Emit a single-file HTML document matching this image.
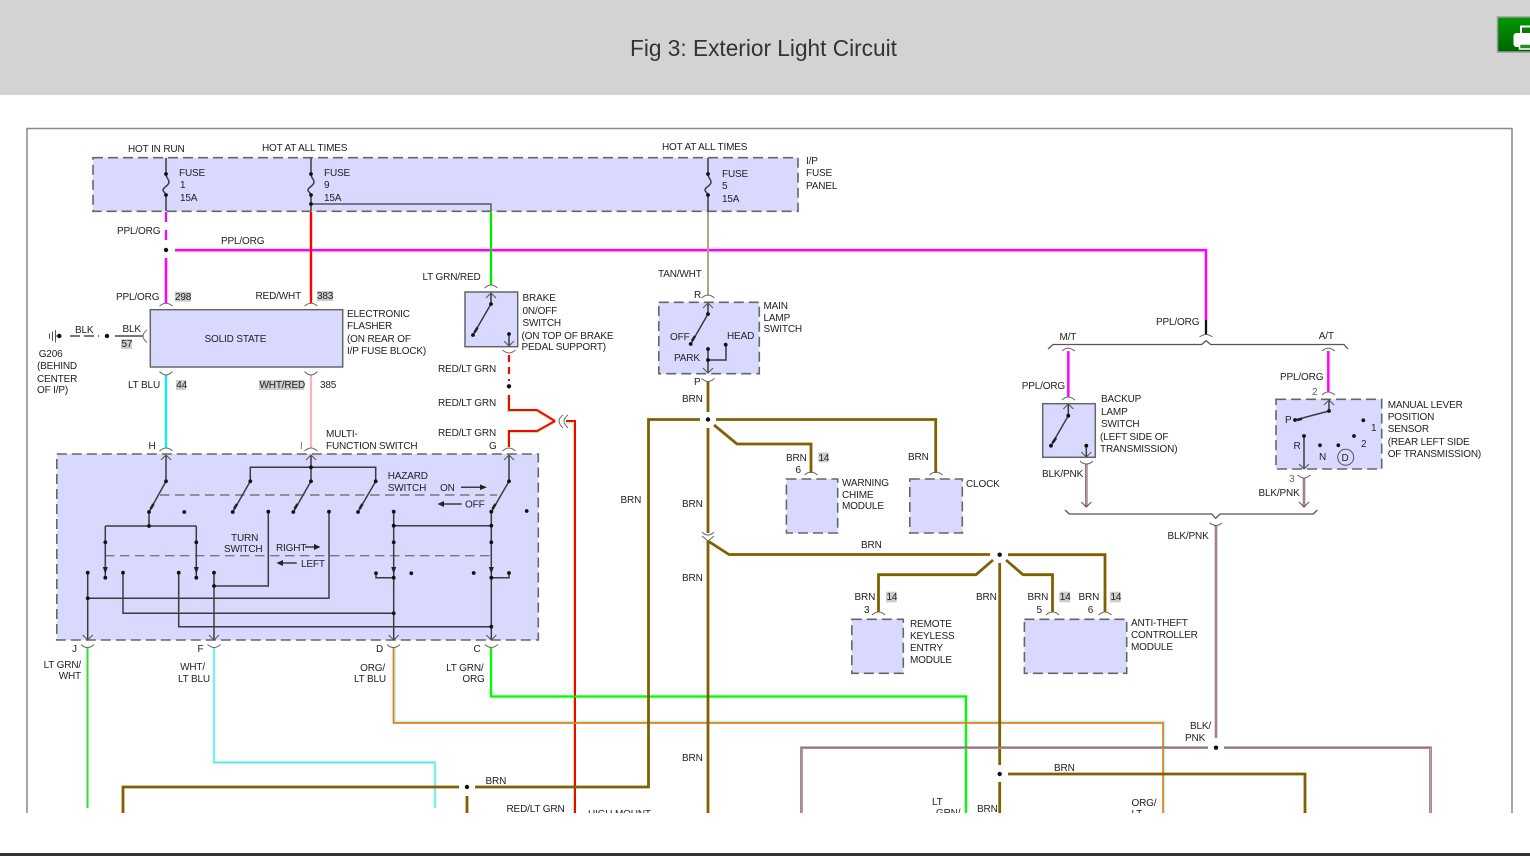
<!DOCTYPE html>
<html><head><meta charset="utf-8"><title>Fig 3: Exterior Light Circuit</title>
<style>
html,body{margin:0;padding:0;background:#fff;width:1530px;height:856px;overflow:hidden}
svg{position:absolute;left:0;top:0;display:block}
text{font-family:"Liberation Sans",Arial,sans-serif;font-size:10px;letter-spacing:-.16px;fill:#222}
text.r{text-anchor:end}
.k{fill:none;stroke:#3c3c3c;stroke-width:1.5}
.t{fill:none;stroke:#666;stroke-width:1}
.pn{fill:#d9d9ff;stroke:#666;stroke-width:1.6;stroke-dasharray:10 5}
.ps{fill:#d9d9ff;stroke:#666;stroke-width:1.5}
.g{fill:#ccc}
.d{fill:#111}
</style></head><body>
<svg width="1530" height="856" viewBox="0 0 1530 856" xmlns="http://www.w3.org/2000/svg">
<defs>
<linearGradient id="gb" x1="0" y1="0" x2="0" y2="1"><stop offset="0" stop-color="#009a00"/><stop offset="1" stop-color="#006400"/></linearGradient>
<clipPath id="cp"><rect x="0" y="96" width="1530" height="717"/></clipPath>
<clipPath id="cb"><rect x="1490" y="10" width="40" height="50"/></clipPath>
</defs>
<rect x="0" y="0" width="1530" height="95" fill="#d3d3d3"/>
<text x="630" y="56" style="font-size:22.66px;letter-spacing:0;fill:#333">Fig 3: Exterior Light Circuit</text>
<g clip-path="url(#cb)">
<rect x="1497.5" y="17" width="40" height="35" fill="url(#gb)" stroke="#999" stroke-width="1.5"/>
<rect x="1521" y="26.5" width="12" height="8" fill="#0a7a0a" stroke="#fff" stroke-width="2"/>
<rect x="1513.5" y="33" width="20" height="14" rx="3" fill="#fff"/>
<rect x="1519.5" y="44" width="14" height="5" fill="#2a8a2a" stroke="#fff" stroke-width="1.5"/>
</g>
<rect x="0" y="853" width="1530" height="3" fill="#333"/>

<g clip-path="url(#cp)">
<path d="M27 813V128.5H1512V813" fill="#fff" stroke="#888" stroke-width="1.5"/>

<!-- panels -->
<rect class="pn" x="93" y="157.7" width="705" height="53.6"/>
<rect class="pn" x="56.8" y="454" width="481.5" height="186"/>
<rect class="pn" x="658.8" y="302.3" width="100.5" height="71.4"/>
<rect class="pn" x="786.4" y="479" width="51.3" height="54"/>
<rect class="pn" x="909.8" y="479" width="52.5" height="54"/>
<rect class="pn" x="851.8" y="619.3" width="51.5" height="54"/>
<rect class="pn" x="1024.4" y="619.3" width="102.3" height="54"/>
<rect class="pn" x="1276" y="399.3" width="105.7" height="69.7"/>
<rect class="ps" x="150.3" y="309.7" width="192.4" height="57.3"/>
<rect class="ps" x="465" y="292" width="52.7" height="54.7"/>
<rect class="ps" x="1042.7" y="403.7" width="52.6" height="53.6"/>

<!-- wires: halos -->
<g stroke-width="3" fill="none">
<path stroke="#f6a6f6" d="M166 258V303M175 250.6H1206V320M1068.3 351V397M1328.3 351V392"/>
<path stroke="#ff9a9a" d="M311 212V303"/>
<path stroke="#a8f7a8" d="M491 212V285M491 648V696.5H966V813"/>
<path stroke="#a8f5a8" d="M508.5 395V410.8H537L555 421.6M508.5 447V431.8H537L555 421.6M566 422H574.5V813"/>
<path stroke="#9cf5f5" d="M166 375V448"/>
<path stroke="#b9f5f5" d="M214 648V762.5H435V808"/>
<path stroke="#b4f5ee" stroke-width="2" d="M394.8 648V721.6H1164.2V813"/>
</g>
<!-- wires -->
<g fill="none">
<path stroke="#f0f" stroke-width="2.3" d="M166 212V240" stroke-dasharray="10 8"/>
<path stroke="#f0f" stroke-width="2.3" d="M166 258V303M175 250H1206V320M1068.3 351V397M1328.3 351V392"/>
<path stroke="#111" stroke-width="2.3" d="M1206 320V335"/>
<path stroke="#f00" stroke-width="2" d="M311 212V303"/>
<path stroke="#00e800" stroke-width="2" d="M491 212V285"/>
<path stroke="#f00" stroke-width="2.2" d="M509 355V381" stroke-dasharray="7 5"/>
<path stroke="#f00" stroke-width="2" d="M509 395V410H537L555 421M509 447V431H537L555 421M566 421H575V813"/>
<path stroke="#00f0f0" stroke-width="1.8" d="M166 375V448"/>
<path stroke="#f9b4b4" stroke-width="2.2" d="M311 375V448"/>
<path stroke="#b5a57f" stroke-width="2" d="M708 212V296"/>
<path stroke="#2de02d" stroke-width="2" d="M87.5 648V808"/>
<path stroke="#59e8e8" stroke-width="1.2" d="M214 648V762.5H435V808"/>
<path stroke="#0f0" stroke-width="2" d="M491 648V696.5H966V813"/>
<path stroke="#f07c10" stroke-width="1.7" d="M393.5 648V723H1163V813"/>
<path stroke="#806000" stroke-width="2.8" d="M708 381V412M700 419.5H648.5V787H475M459 787H123V813M467 796V813M716 419.5H935.7V473M714 425L737 444H811V473M708 428V533M708 541V813M708 541L729 554.5H990M1008 554.7H1105V612M993 560L976 574.7H878.5V612M1006 560L1023 574.7H1052.5V612M999.7 563V765M1008 774H1305V813M999.7 782V813"/>
<path stroke="#707070" stroke-width="2.5" d="M1086.3 464V507M1304 478V507M1216 525V738M1224 747.7H1430.5V813M1208 747.7H801.5V813"/>
<path stroke="#ee8fa4" stroke-width=".9" d="M1086.3 464V507M1304 478V507M1216 525V738M1224 748.2H1430.5V813M1208 748.2H801.8V813"/>
</g>

<!-- fuses -->
<g class="k">
<path d="M166 158V174C166 178 169 179 169 182C169 186 163 187 163 190C163 192 166 193 166 195V211"/>
<path d="M311 158V174C311 178 314 179 314 182C314 186 308 187 308 190C308 192 311 193 311 195V211"/>
<path d="M708 158V174C708 178 711 179 711 182C711 186 705 187 705 190C705 192 708 193 708 195V211"/>
<path d="M311 204H491V211" stroke-width="1.2"/>
</g>
<!-- connectors -->
<g class="t">
<path d="M159.5 306Q163 303.3 166 303.3Q169 303.3 172.5 306M304.5 306Q308 303.3 311 303.3Q314 303.3 317.5 306M484.5 288Q488 285 491 285Q494 285 497.5 288"/>
<path d="M159.5 371.5Q163 375 166 375Q169 375 172.5 371.5M304.5 371.5Q308 375 311 375Q314 375 317.5 371.5M502.5 350Q506 353 509 353Q512 353 515.5 350"/>
<path d="M147 330Q143 333 143 336Q143 339 147 342.5"/>
<path d="M159.5 451Q163 448 166 448Q169 448 172.5 451M304.5 451Q308 448 311 448Q314 448 317.5 451M502.5 451Q506 448 509 448Q512 448 515.5 451"/>
<path d="M81 644.5Q84 647.5 87.5 647.5Q91 647.5 94 644.5M207.5 644.5Q211 647.5 214 647.5Q217 647.5 220.5 644.5M387 644.5Q390 647.5 393.5 647.5Q397 647.5 400 644.5M485 644.5Q488 647.5 491.3 647.5Q494 647.5 498 644.5"/>
<path d="M701.5 298Q705 295 708 295Q711 295 714.5 298M701.5 378.5Q705 381.5 708 381.5Q711 381.5 714.5 378.5"/>
<path d="M702 532Q705 535 708 535Q711 535 714 532"/>
<path d="M702 536L708 541L714 536" />
<path d="M804.5 475Q808 472 811 472Q814 472 817.5 475M929.5 475Q933 472 936 472Q939 472 942.5 475"/>
<path d="M872 615Q875 612 878.5 612Q882 612 885 615M1046 615Q1049 612 1052.5 612Q1056 612 1059 615M1098.5 615Q1102 612 1105 612Q1108 612 1111.5 615"/>
<path d="M1199.5 337Q1203 334.5 1206 334.5Q1209 334.5 1212.5 337M1062 351Q1065 348.3 1068.3 348.3Q1071 348.3 1075 351M1322 351Q1325 348.3 1328.3 348.3Q1331 348.3 1335 351"/>
<path d="M1062 400Q1065 397 1068.3 397Q1071 397 1075 400M1322 395Q1325 392 1328.3 392Q1331 392 1335 395"/>
<path d="M1080 461Q1083 464 1086.3 464Q1090 464 1093 461M1297.5 475Q1301 478 1304 478Q1307 478 1310.5 475M1209.5 522.7Q1213 525.5 1215.7 525.5Q1219 525.5 1222 522.7"/>
<path d="M563 415Q559 418 559 421Q559 424 563 428M568 415Q564 418 564 421Q564 424 568 428"/>
</g>
<!-- buses -->
<path fill="none" stroke="#555" stroke-width="1.3" d="M1048 349L1053 344.5H1201.7L1206 340.7L1210.7 344.5H1344L1348 349M1065 510L1069.3 514H1211.7L1215.7 518.3L1220 514H1313.3L1317.3 510"/>

<!-- ground -->
<g stroke="#555" fill="none">
<path stroke-width="1" d="M49.5 333.5V339M52.5 331.5V341M55.5 330V342.5"/>
<path stroke-width="1" d="M55.5 336H59"/>
<path stroke-width="2" stroke="#777" d="M70 336H99" stroke-dasharray="10 4"/>
<path stroke-width="2" stroke="#777" d="M115 336H143"/>
</g>

<!-- multifunction internals -->
<g fill="none" stroke="#777" stroke-width="1.4" stroke-dasharray="9.5 5.5"><path d="M160 495H497M105 555.7H490"/></g>
<g class="k">
<path d="M166 455V481.3L149 512V526M105.3 526H196.3M105.3 526V577.7M196.3 526V577.7"/>
<path d="M250.3 481.3V467.3H375.7V481.3L358 512M250.3 481.3L232.7 512M311 455V481.3L293.3 512"/>
<path d="M268.3 512V586H214M329 512V598.3H87.7"/>
<path d="M87.7 572.7V640M214 572.7V640M123 572.7V613.3H393.7M178.7 572.7V626.7H491.3"/>
<path d="M393.7 512V640M491.3 512V640M393.7 525.7H491.3M376 573.3V577.7H393.7M491.3 577.7H509V573"/>
<path d="M509 455V481.3L491.3 512"/>
<path d="M708 303V314L690.7 344M708 349V373M708 360H726V345"/>
<path d="M491 293V304L473 335M509 334V346"/>
<path d="M1068.3 404V415.7L1051 445.7M1086.3 445.7V457"/>
<path d="M1329 400V411L1295 420M1304 436V469"/>
<path d="M461 487.3H480M461.7 504H444M305 547H314M296.7 563H283"/>
</g>
<!-- chevrons -->
<g fill="none" stroke="#555" stroke-width="1">
<path d="M161 460L166 455L171 460M306 460L311 455L316 460M504 460L509 455L514 460"/>
<path d="M82.7 635L87.7 640L92.7 635M209 635L214 640L219 635M388.7 635L393.7 640L398.7 635M486.3 635L491.3 640L496.3 635"/>
<path d="M703 308L708 303L713 308M703 368L708 373L713 368M486 298L491 293L496 298M504 341L509 346L514 341"/>
<path d="M1063.3 409L1068.3 404L1073.3 409M1081.3 452L1086.3 457L1091.3 452M1324 405L1329 400L1334 405M1299 464L1304 469L1309 464"/>
<path d="M1081.3 502L1086.3 507L1091.3 502M1299 502L1304 507L1309 502"/>
</g>
<!-- heads -->
<g fill="#222">
<path d="M102.8 567H107.8L105.3 574ZM193.8 567H198.8L196.3 574ZM391.2 567H396.2L393.7 574ZM488.8 567H493.8L491.3 574Z"/>
<path d="M480 484.5L487 487.3L480 490ZM444 501L437.5 504L444 507ZM314 544L320.5 547L314 550ZM283 560L276.5 563L283 566Z"/>
</g>
<g stroke="#222" stroke-width="2.6" fill="none">
<path d="M150.5 509L153.5 504M234 509L237 504M294.5 509L297.5 504M359.5 509L362.5 504M492.5 509L495.5 504M692 341L695 336M474.5 332.5L477.5 327.5M1052.5 443L1056 438M1297 420L1302 418.7"/>
</g>
<!-- dots -->
<g class="d">
<circle cx="166" cy="174" r="1.9"/><circle cx="166" cy="195" r="1.9"/><circle cx="311" cy="174" r="1.9"/><circle cx="311" cy="195" r="1.9"/><circle cx="311" cy="204" r="1.9"/><circle cx="708" cy="174" r="1.9"/><circle cx="708" cy="195" r="1.9"/>
<circle cx="166" cy="250" r="2.2"/><circle cx="59.3" cy="336" r="2.2"/><circle cx="107" cy="336" r="2.2"/><circle cx="509" cy="386.3" r="2.2"/>
<circle cx="491" cy="304" r="1.9"/><circle cx="473" cy="335" r="1.9"/><circle cx="509" cy="334" r="1.9"/>
<circle cx="708" cy="314" r="1.9"/><circle cx="690.7" cy="344" r="1.9"/><circle cx="708" cy="349" r="1.9"/><circle cx="725.7" cy="344.7" r="1.9"/><circle cx="708" cy="360" r="1.9"/>
<circle cx="708" cy="419.5" r="2.2"/><circle cx="999.7" cy="554.7" r="2.2"/><circle cx="999.7" cy="774" r="2.2"/><circle cx="467" cy="787" r="2.2"/><circle cx="1216" cy="747.7" r="2.2"/>
<circle cx="166" cy="481.3" r="1.9"/><circle cx="149" cy="512" r="1.9"/><circle cx="184.3" cy="512" r="1.9"/><circle cx="149" cy="526" r="1.9"/>
<circle cx="105.3" cy="542.3" r="1.9"/><circle cx="196.3" cy="542.3" r="1.9"/><circle cx="105.3" cy="577.7" r="1.9"/><circle cx="196.3" cy="577.7" r="1.9"/>
<circle cx="250.3" cy="481.3" r="1.9"/><circle cx="311" cy="467.3" r="1.9"/><circle cx="311" cy="481.3" r="1.9"/><circle cx="375.7" cy="481.3" r="1.9"/>
<circle cx="232.7" cy="512" r="1.9"/><circle cx="293.3" cy="512" r="1.9"/><circle cx="358" cy="512" r="1.9"/><circle cx="268.3" cy="511.7" r="1.9"/><circle cx="329" cy="511.7" r="1.9"/>
<circle cx="87.7" cy="572.7" r="1.9"/><circle cx="123" cy="572.7" r="1.9"/><circle cx="178.7" cy="572.7" r="1.9"/><circle cx="214" cy="572.7" r="1.9"/><circle cx="214" cy="586" r="1.9"/><circle cx="87.7" cy="598.3" r="1.9"/>
<circle cx="393.7" cy="511.7" r="1.9"/><circle cx="393.7" cy="525.7" r="1.9"/><circle cx="393.7" cy="542.3" r="1.9"/><circle cx="393.7" cy="577.7" r="1.9"/><circle cx="393.7" cy="613.3" r="1.9"/>
<circle cx="491.3" cy="511.7" r="1.9"/><circle cx="491.3" cy="525.7" r="1.9"/><circle cx="491.3" cy="542.3" r="1.9"/><circle cx="491.3" cy="577.7" r="1.9"/><circle cx="491.3" cy="626.7" r="1.9"/>
<circle cx="376" cy="573.3" r="1.9"/><circle cx="411.3" cy="573.3" r="1.9"/><circle cx="473.7" cy="573" r="1.9"/><circle cx="509" cy="573" r="1.9"/>
<circle cx="509" cy="481.3" r="1.9"/><circle cx="526.7" cy="511" r="1.9"/>
<circle cx="1068.3" cy="415.7" r="1.9"/><circle cx="1051" cy="445.7" r="1.9"/><circle cx="1086.3" cy="445.7" r="1.9"/>
<circle cx="1329" cy="411" r="1.9"/><circle cx="1295" cy="420" r="1.9"/><circle cx="1363.3" cy="420.3" r="1.9"/><circle cx="1354" cy="436" r="1.9"/><circle cx="1338.3" cy="445.3" r="1.9"/><circle cx="1320" cy="445.3" r="1.9"/><circle cx="1304" cy="436" r="1.9"/>
</g>
<circle cx="1345.7" cy="457.3" r="8" fill="none" stroke="#555" stroke-width="1"/>

<!-- grey tags -->
<g class="g">
<rect x="175" y="291.7" width="16" height="10"/><rect x="317" y="291" width="16" height="10"/><rect x="121" y="339" width="11" height="10"/>
<rect x="176" y="380" width="10" height="10"/><rect x="259" y="380" width="45.3" height="10"/>
<rect x="818.3" y="452.3" width="10" height="10"/><rect x="886" y="591.7" width="10.7" height="10.6"/><rect x="1059.3" y="591.7" width="10.7" height="10.6"/><rect x="1110" y="591.7" width="10.7" height="10.6"/>
</g>

<!-- labels -->
<text x="128" y="152">HOT IN RUN</text><text x="262" y="151">HOT AT ALL TIMES</text><text x="662" y="150">HOT AT ALL TIMES</text>
<text x="179" y="176">FUSE</text><text x="180" y="188">1</text><text x="180" y="201">15A</text>
<text x="324" y="176">FUSE</text><text x="324" y="188">9</text><text x="324" y="201">15A</text>
<text x="722" y="177">FUSE</text><text x="722" y="189">5</text><text x="722" y="202">15A</text>
<text x="806" y="164">I/P</text><text x="806" y="176">FUSE</text><text x="806" y="189">PANEL</text>
<text x="117" y="234">PPL/ORG</text><text x="221" y="244">PPL/ORG</text><text x="116" y="300">PPL/ORG</text><text x="175" y="300">298</text>
<text x="255.5" y="299">RED/WHT</text><text x="317" y="299">383</text>
<text x="347" y="317">ELECTRONIC</text><text x="347" y="329">FLASHER</text><text x="347" y="342">(ON REAR OF</text><text x="347" y="354">I/P FUSE BLOCK)</text>
<text x="204.5" y="342">SOLID STATE</text>
<text x="75" y="333">BLK</text><text x="122.5" y="332">BLK</text><text x="121.5" y="347">57</text>
<text x="38.7" y="357">G206</text><text x="37" y="369">(BEHIND</text><text x="37" y="382">CENTER</text><text x="37" y="393">OF I/P)</text>
<text x="128" y="388">LT BLU</text><text x="176.3" y="388">44</text><text x="259.5" y="388">WHT/RED</text><text x="320" y="388">385</text>
<text x="422.5" y="280">LT GRN/RED</text>
<text x="438" y="372">RED/LT GRN</text><text x="438" y="406">RED/LT GRN</text><text x="438" y="436">RED/LT GRN</text>
<text x="522.5" y="301">BRAKE</text><text x="522.5" y="314">0N/OFF</text><text x="522.5" y="326">SWITCH</text><text x="521.5" y="339">(ON TOP OF BRAKE</text><text x="521.5" y="350">PEDAL SUPPORT)</text>
<text x="658" y="277">TAN/WHT</text><text x="694" y="298">R</text>
<text x="763.5" y="309">MAIN</text><text x="763.5" y="321">LAMP</text><text x="763.5" y="332">SWITCH</text>
<text x="670" y="340">OFF</text><text x="727" y="339">HEAD</text><text x="674" y="361">PARK</text><text x="694" y="385">P</text>
<text x="682" y="402">BRN</text><text x="620.5" y="503">BRN</text><text x="682" y="507">BRN</text><text x="682" y="581">BRN</text><text x="682" y="761">BRN</text>
<text x="786" y="461">BRN</text><text x="818.5" y="461">14</text><text x="795.5" y="473">6</text><text x="908" y="460">BRN</text>
<text x="842" y="486">WARNING</text><text x="842" y="498">CHIME</text><text x="842" y="509">MODULE</text><text x="966" y="487">CLOCK</text>
<text x="861" y="548">BRN</text>
<text x="326" y="437">MULTI-</text><text x="326" y="449">FUNCTION SWITCH</text>
<text x="148.5" y="449">H</text><text x="300" y="449" style="fill:#777">I</text><text x="489" y="449">G</text>
<text x="387.7" y="479">HAZARD</text><text x="387.7" y="491">SWITCH</text><text x="440" y="491">ON</text><text x="465" y="507.5">OFF</text>
<text x="231" y="541">TURN</text><text x="224" y="552">SWITCH</text><text x="276" y="551">RIGHT</text><text x="301" y="567">LEFT</text>
<text x="72" y="652">J</text><text x="197.5" y="652">F</text><text x="376" y="652">D</text><text x="473.5" y="652">C</text>
<text class="r" x="81" y="668">LT GRN/</text><text class="r" x="81" y="679">WHT</text>
<text class="r" x="205" y="670">WHT/</text><text class="r" x="210" y="682">LT BLU</text>
<text class="r" x="385" y="671">ORG/</text><text class="r" x="386" y="682">LT BLU</text>
<text class="r" x="483.5" y="671">LT GRN/</text><text class="r" x="484.7" y="682">ORG</text>
<text x="485.5" y="784">BRN</text><text x="506.5" y="812">RED/LT GRN</text><text x="588" y="817">HIGH MOUNT</text>
<text x="932" y="805">LT</text><text x="936" y="816">GRN/</text><text x="977" y="812">BRN</text><text x="1131.5" y="806">ORG/</text><text x="1131.5" y="817">LT</text>
<text x="1054" y="771">BRN</text><text x="1190" y="729">BLK/</text><text x="1185" y="741">PNK</text><text x="1167.5" y="539">BLK/PNK</text>
<text x="976" y="600">BRN</text><text x="854.5" y="600">BRN</text><text x="886.5" y="600">14</text><text x="864" y="613">3</text>
<text x="1027.5" y="600">BRN</text><text x="1059.8" y="600">14</text><text x="1036.5" y="613">5</text>
<text x="1078.5" y="600">BRN</text><text x="1110.5" y="600">14</text><text x="1087.7" y="613">6</text>
<text x="910" y="627">REMOTE</text><text x="910" y="639">KEYLESS</text><text x="910" y="651">ENTRY</text><text x="910" y="663">MODULE</text>
<text x="1131" y="626">ANTI-THEFT</text><text x="1131" y="638">CONTROLLER</text><text x="1131" y="650">MODULE</text>
<text x="1156" y="325">PPL/ORG</text><text x="1059.5" y="340">M/T</text><text x="1318.7" y="339">A/T</text><text x="1021.7" y="389">PPL/ORG</text>
<text x="1101" y="402">BACKUP</text><text x="1101" y="415">LAMP</text><text x="1101" y="427">SWITCH</text><text x="1100" y="440">(LEFT SIDE OF</text><text x="1100" y="452">TRANSMISSION)</text>
<text x="1042" y="477">BLK/PNK</text><text x="1280" y="380">PPL/ORG</text><text x="1312" y="395" style="fill:#666">2</text>
<text x="1285" y="423">P</text><text x="1371" y="431">1</text><text x="1293.5" y="449">R</text><text x="1319" y="460">N</text><text x="1341.5" y="461">D</text><text x="1361" y="447">2</text>
<text x="1387.7" y="408">MANUAL LEVER</text><text x="1387.7" y="420">POSITION</text><text x="1387.7" y="432">SENSOR</text><text x="1387.7" y="445">(REAR LEFT SIDE</text><text x="1387.7" y="457">OF TRANSMISSION)</text>
<text x="1289" y="482" style="fill:#666">3</text><text x="1258.5" y="496">BLK/PNK</text>
</g>
</svg>
</body></html>
